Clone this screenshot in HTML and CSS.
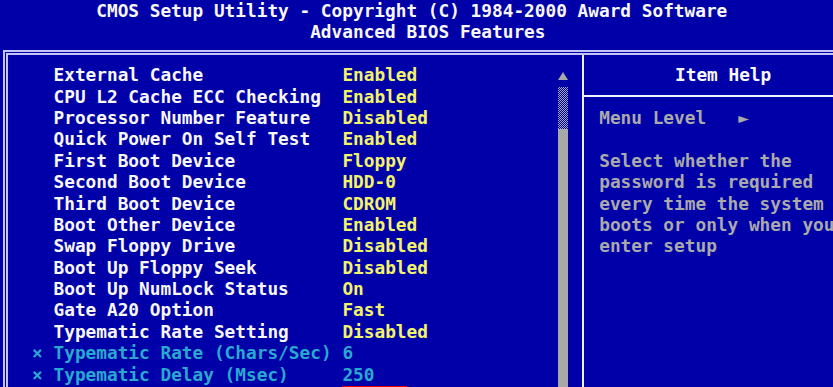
FILE: index.html
```
<!DOCTYPE html>
<html lang="en">
<head>
    <meta charset="UTF-8">
    <meta name="viewport" content="width=device-width, initial-scale=1.0">
    <title>CMOS Setup Utility</title>
    <link rel="stylesheet" href="styles.css">
</head>
<body>
    <div class="screen">
        <div class="title">CMOS Setup Utility - Copyright (C) 1984-2000 Award Software</div>
        <div class="subtitle">Advanced BIOS Features</div>

        <div class="frame">
            <div class="menu">
                <div class="items">
                    <div class="row"><span class="mark"></span><span class="name">External Cache</span><span class="value">Enabled</span></div>
                    <div class="row"><span class="mark"></span><span class="name">CPU L2 Cache ECC Checking</span><span class="value">Enabled</span></div>
                    <div class="row"><span class="mark"></span><span class="name">Processor Number Feature</span><span class="value">Disabled</span></div>
                    <div class="row"><span class="mark"></span><span class="name">Quick Power On Self Test</span><span class="value">Enabled</span></div>
                    <div class="row"><span class="mark"></span><span class="name">First Boot Device</span><span class="value">Floppy</span></div>
                    <div class="row"><span class="mark"></span><span class="name">Second Boot Device</span><span class="value">HDD-0</span></div>
                    <div class="row"><span class="mark"></span><span class="name">Third Boot Device</span><span class="value">CDROM</span></div>
                    <div class="row"><span class="mark"></span><span class="name">Boot Other Device</span><span class="value">Enabled</span></div>
                    <div class="row"><span class="mark"></span><span class="name">Swap Floppy Drive</span><span class="value">Disabled</span></div>
                    <div class="row"><span class="mark"></span><span class="name">Boot Up Floppy Seek</span><span class="value">Disabled</span></div>
                    <div class="row"><span class="mark"></span><span class="name">Boot Up NumLock Status</span><span class="value">On</span></div>
                    <div class="row"><span class="mark"></span><span class="name">Gate A20 Option</span><span class="value">Fast</span></div>
                    <div class="row"><span class="mark"></span><span class="name">Typematic Rate Setting</span><span class="value">Disabled</span></div>
                    <div class="row off"><span class="mark">×</span><span class="name">Typematic Rate (Chars/Sec)</span><span class="value">6</span></div>
                    <div class="row off"><span class="mark">×</span><span class="name">Typematic Delay (Msec)</span><span class="value">250</span></div>
                    <div class="row"><span class="mark"></span><span class="name"></span><span class="value"><span class="selected"></span></span></div>
                </div>
                <div class="scroll">
                    <div class="scroll-up">
                        <svg width="10" height="8" viewBox="0 0 10 8"><polygon points="5,0 10,8 0,8" fill="#a8a8a8"/></svg>
                    </div>
                    <div class="scroll-track"></div>
                    <div class="scroll-thumb"></div>
                </div>
            </div>

            <div class="help">
                <div class="help-title">Item Help</div>
                <div class="help-rule"></div>
                <div class="help-body">
                    <div class="line">Menu Level   ►</div>
                    <div class="line"> </div>
                    <div class="line">Select whether the</div>
                    <div class="line">password is required</div>
                    <div class="line">every time the system</div>
                    <div class="line">boots or only when you</div>
                    <div class="line">enter setup</div>
                </div>
            </div>
        </div>
    </div>
</body>
</html>
```

FILE: styles.css
```
body {
    margin: 0;
    background-color: #0000a8;
    overflow: hidden;
    height: 387px;
}

.screen {
    width: 833px;
    overflow: hidden;
    font-family: 'DejaVu Sans Mono', monospace;
    font-weight: bold;
    font-size: 17.77px;
    line-height: 21.4px;
    color: #f8f8f8;
    padding-top: 1px;
}

.title {
    padding-left: 9ch;
    white-space: nowrap;
}

.subtitle {
    padding-left: 29ch;
}

.frame {
    display: flex;
    width: 850px;
    margin-top: 6.2px;
    margin-left: 3px;
    height: 332px;
    border-top: 5px double #c4c4f8;
    border-left: 5px double #c4c4f8;
}

.menu {
    display: flex;
    width: 574px;
    padding-top: 10.2px;
    overflow: hidden;
}

.items {
    width: 550px;
}

.row {
    display: grid;
    grid-template-columns: 24.1px 21.4px 288.9px 1fr;
    height: 21.4px;
    white-space: nowrap;
}

.mark {
    grid-column: 2;
}

.name {
    grid-column: 3;
}

.value {
    grid-column: 4;
    color: #f4f468;
}

.row.off .mark,
.row.off .name,
.row.off .value {
    color: #28aad0;
}

.selected {
    display: block;
    width: 6ch;
    height: 21.4px;
    background-color: #e80000;
}

.scroll {
    display: flex;
    flex-direction: column;
    width: 10px;
}

.scroll-up {
    height: 21.4px;
    display: flex;
    align-items: center;
    justify-content: center;
}

.scroll-track {
    height: 42.8px;
    background-image: repeating-conic-gradient(#a8a8a8 0 25%, transparent 0 50%);
    background-size: 2px 2px;
}

.scroll-thumb {
    flex: 1;
    background-color: #a8a8a8;
}

.help {
    flex: 1;
    padding-top: 10.2px;
    border-left: 2px solid #f0f0ff;
    overflow: hidden;
}

.help-title {
    padding-left: 91px;
}

.help-rule {
    height: 2px;
    margin: 8.4px 0 11px;
    background-color: #f0f0ff;
}

.help-body {
    padding-left: 15.2px;
    color: #aaaaaa;
}

.help-body .line {
    height: 21.4px;
    white-space: pre;
}
```
